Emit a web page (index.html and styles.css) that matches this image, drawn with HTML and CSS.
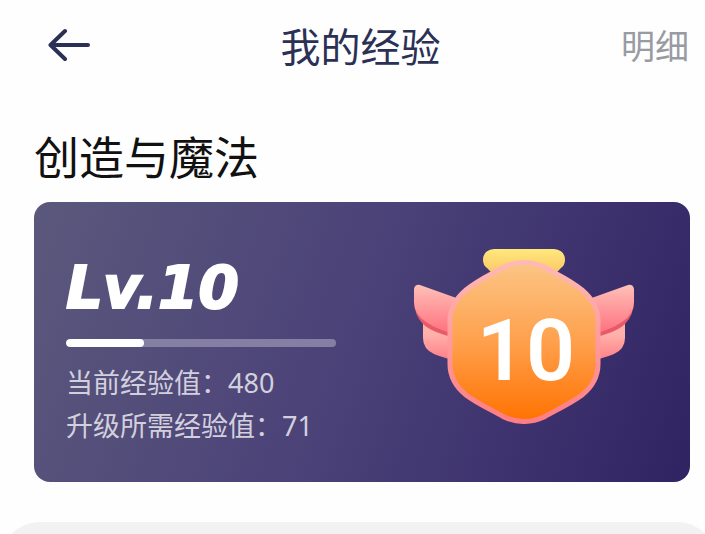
FILE: index.html
```
<!DOCTYPE html>
<html lang="zh-CN">
<head>
    <meta charset="UTF-8">
    <meta name="viewport" content="width=device-width, initial-scale=1.0">
    <title>我的经验</title>
    <link rel="stylesheet" href="styles.css">
</head>
<body>
    <div class="page">
        <header class="navbar">
            <button type="button" class="back" aria-label="返回">
                <svg width="42" height="34" viewBox="0 0 42 34" fill="none" stroke="currentColor" stroke-width="4" stroke-linecap="round" stroke-linejoin="round">
                    <path d="M40 17H3M17 3L2.500 17L17 31"/>
                </svg>
            </button>
            <h1 class="navbar-title">我的经验</h1>
            <a href="#" class="detail-link">明细</a>
        </header>

        <main class="content">
            <h2 class="section-title">创造与魔法</h2>
            <section class="level-card">
                <div class="level-info">
                    <div class="level-name">Lv.10</div>
                    <progress class="level-progress" value="29" max="100" aria-label="经验进度"></progress>
                    <p class="level-text">当前经验值：480</p>
                    <p class="level-text">升级所需经验值：71</p>
                </div>
                <svg class="badge" width="220" height="176" viewBox="0 0 220 176">
                    <defs>
                        <linearGradient id="knot" x1="0" y1="0" x2="0" y2="1">
                            <stop offset="0" stop-color="#ffe97c"/>
                            <stop offset="0.800" stop-color="#fbc668"/>
                        </linearGradient>
                        <linearGradient id="wing" x1="0" y1="0" x2="0" y2="1">
                            <stop offset="0" stop-color="#ffc0b8"/>
                            <stop offset="1" stop-color="#ff6c7a"/>
                        </linearGradient>
                        <linearGradient id="wing-low" x1="0" y1="0" x2="0" y2="1">
                            <stop offset="0.300" stop-color="#ffb2ab"/>
                            <stop offset="1" stop-color="#ff7d87"/>
                        </linearGradient>
                        <linearGradient id="rim" x1="0" y1="0" x2="0" y2="1">
                            <stop offset="0" stop-color="#ffb9b4"/>
                            <stop offset="1" stop-color="#ff7d84"/>
                        </linearGradient>
                        <linearGradient id="face" x1="0" y1="0" x2="0" y2="1">
                            <stop offset="0" stop-color="#fbc585"/>
                            <stop offset="0.500" stop-color="#ffa04d"/>
                            <stop offset="1" stop-color="#ff7200"/>
                        </linearGradient>
                        <g id="side">
                            <path fill="url(#wing-low)" d="M9 74V90Q9 101 20 106Q32 111 46 113V76Z"/>
                            <path fill="#e85a67" d="M0 52Q0 67 9 76Q18 85 46 91V60Z"/>
                            <path fill="url(#wing)" d="M0 41Q1 36 6 37L48 52V88Q23 82 12 74Q0 66 0 54Z"/>
                        </g>
                    </defs>
                    <path fill="url(#knot)" d="M80 1H140Q151 2 151 12Q151 17 147 20L136 31H84L73 20Q69 17 69 12Q69 2 80 1Z"/>
                    <use href="#side"/>
                    <use href="#side" transform="translate(220 0) scale(-1 1)"/>
                    <path fill="url(#face)" stroke="url(#rim)" stroke-width="5" d="M90 19Q110 10 130 19C142 26 156 32 168 42Q184 56 184 72V116Q184 134 168 147C156 156 142 162 130 169Q110 178 90 169C78 162 64 156 52 147Q36 134 36 116V72Q36 56 52 42C64 32 78 26 90 19Z"/>
                    <text class="badge-number" x="112" y="132" text-anchor="middle">10</text>
                </svg>
            </section>
        </main>

        <div class="panel"></div>
    </div>
</body>
</html>
```
FILE: styles.css
```
* {
    box-sizing: border-box;
}
body {
    margin: 0;
    background-color: #fefefe;
    font-family: 'Noto Sans', 'Noto Sans CJK SC', sans-serif;
}
.page {
    height: 100vh;
    overflow: hidden;
}
.navbar {
    display: grid;
    grid-template-columns: 1fr auto 1fr;
    align-items: center;
    height: 90px;
    padding: 0 16px 0 32px;
    color: #2b3154;
}
.back {
    display: flex;
    justify-self: start;
    padding: 0 16px;
    border: none;
    background: none;
    color: inherit;
    cursor: pointer;
}
.navbar-title {
    margin: 0;
    font-family: 'Noto Sans CJK SC', sans-serif;
    font-size: 40px;
    font-weight: 400;
    line-height: 60px;
}
.detail-link {
    justify-self: end;
    color: #999ba3;
    font-family: 'Noto Sans CJK SC', sans-serif;
    font-size: 34px;
    line-height: 60px;
    text-decoration: none;
}
.content {
    padding: 36px 15px 40px 34px;
}
.section-title {
    margin: 0 0 16px;
    color: #111;
    font-family: 'Noto Sans CJK SC', sans-serif;
    font-size: 45px;
    font-weight: 400;
    line-height: 60px;
}
.level-card {
    display: flex;
    justify-content: space-between;
    align-items: flex-start;
    padding: 46px 56px 35px 32px;
    border-radius: 16px;
    background: linear-gradient(110deg, #5b587c 0%, #4a4178 50%, #302363 100%);
    color: #fff;
}
.level-info {
    display: flex;
    flex-direction: column;
    width: 270px;
    padding-top: 10px;
}
.level-name {
    font-family: 'DejaVu Sans', sans-serif;
    font-size: 58px;
    font-style: italic;
    font-weight: 700;
    line-height: 60px;
    -webkit-text-stroke: 2px #fff;
}
.level-progress {
    width: 100%;
    height: 8px;
    margin: 21px 0 14px;
    border: none;
    border-radius: 4px;
    background-color: #857fa4;
    overflow: hidden;
    appearance: none;
}
.level-progress::-webkit-progress-bar {
    background-color: #857fa4;
}
.level-progress::-webkit-progress-value {
    border-radius: 4px;
    background-color: #fff;
}
.level-text {
    margin: 0;
    color: #d3d0de;
    font-size: 27px;
    font-weight: 400;
    line-height: 43px;
    white-space: nowrap;
}
.badge {
    flex-shrink: 0;
}
.badge-number {
    fill: #fff;
    font-family: 'Roboto', sans-serif;
    font-size: 86px;
    font-weight: 600;
}
.panel {
    min-height: 80px;
    margin-right: -12px;
    border-radius: 40px 40px 0 0;
    background-color: #f2f2f2;
}
```
